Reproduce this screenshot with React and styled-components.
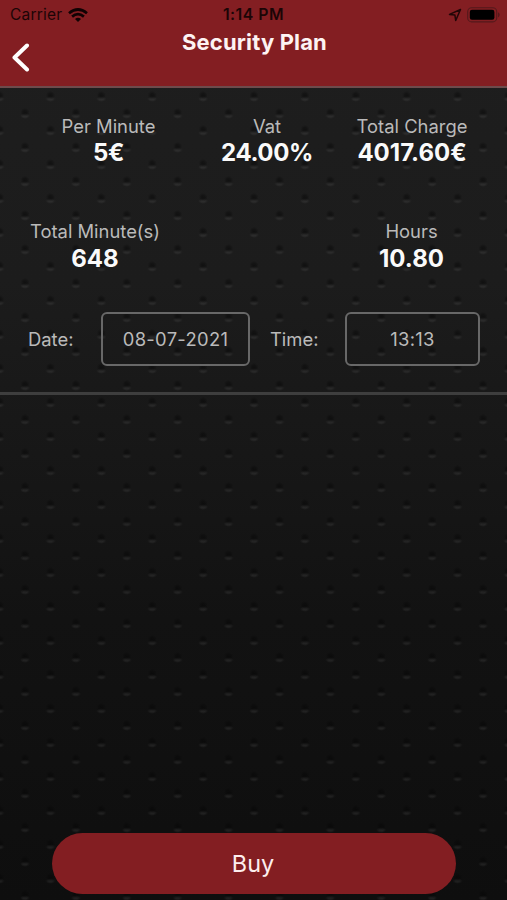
import React from "react";
import styled, { createGlobalStyle } from "styled-components";

const GlobalStyle = createGlobalStyle`
  *, *::before, *::after { box-sizing: border-box; }
  body { margin: 0; background: #0f0f0f; }
`;

const Screen = styled.main`
  height: 900px;
  display: flex;
  flex-direction: column;
  color: #bababa;
  font-family: Inter, "Liberation Sans", sans-serif;
  background-color: #161616;
  background-image:
    radial-gradient(circle at 25px 15.5px, rgba(5, 5, 5, 0.48) 0, rgba(5, 5, 5, 0.38) 2px, transparent 4.5px),
    radial-gradient(circle at 25px 15.5px, rgba(5, 5, 5, 0.48) 0, rgba(5, 5, 5, 0.38) 2px, transparent 4.5px),
    radial-gradient(4.8px 2.8px at 25px 19px, rgba(255, 255, 255, 0.08) 30%, transparent),
    radial-gradient(4.8px 2.8px at 25px 19px, rgba(255, 255, 255, 0.08) 30%, transparent),
    linear-gradient(#1e1e1e 0, #1c1c1c 280px, #181818 420px, #121212 620px, #101010 760px, #0e0e0e 900px);
  background-size: 50.9px 34px, 50.9px 34px, 50.9px 34px, 50.9px 34px, 100% 100%;
  background-position: 0 -5px, 25.45px -22px, 0 -5px, 25.45px -22px, 0 0;
`;

const Header = styled.header`
  height: 88px;
  flex: none;
  background: #831e22;
  border-bottom: 2px solid #6d4b4c;
`;

const StatusBar = styled.div`
  height: 30px;
  display: grid;
  grid-template-columns: 1fr auto 1fr;
  align-items: center;
  padding: 0 7px 0 10px;
  color: #1b0506;
  font-size: 15.5px;
  line-height: 30px;
`;

const Carrier = styled.div`
  display: flex;
  align-items: center;
  gap: 6px;
  letter-spacing: 0.2px;
`;

const Clock = styled.div`
  margin-right: 3px;
  font-size: 15.8px;
  font-weight: 600;
  letter-spacing: 0.5px;
`;

const Indicators = styled.div`
  display: flex;
  justify-content: flex-end;
  align-items: center;
  gap: 5px;
`;

const NavBar = styled.div`
  height: 56px;
  display: grid;
  grid-template-columns: 48px 1fr 46px;
`;

const BackButton = styled.button`
  display: flex;
  align-items: center;
  padding: 0 0 2px 12px;
  border: 0;
  background: none;
`;

const Title = styled.h1`
  margin: 0;
  color: #fdf3f3;
  font-size: 22px;
  font-weight: 700;
  line-height: 25px;
  text-align: center;
  letter-spacing: 0.15px;
`;

const Details = styled.section`
  height: 307px;
  flex: none;
  border-bottom: 3px solid #3e3e3e;
`;

const StatRow = styled.div`
  height: 106px;
  padding-top: ${(p) => p.$top}px;
  display: grid;
  grid-template-columns: ${(p) => p.$columns};
  align-items: start;
`;

const Stat = styled.div`
  text-align: center;
  white-space: nowrap;
`;

const StatLabel = styled.div`
  font-size: 18.4px;
  line-height: 24px;
`;

const StatValue = styled.div`
  color: #fafafa;
  font-size: 24px;
  font-weight: 700;
  line-height: ${(p) => p.$line || 30}px;
  letter-spacing: ${(p) => p.$tracking || 0}px;
`;

const ScheduleRow = styled.div`
  height: 54px;
  margin-top: 12px;
  padding: 0 27px 0 28px;
  display: grid;
  grid-template-columns: 73px 149px 20px 75px 135px;
  align-items: center;
  font-size: 18.4px;
`;

const FieldLabel = styled.label`
  grid-column: ${(p) => p.$column};
`;

const Field = styled.div`
  height: 54px;
  grid-column: ${(p) => p.$column};
  border: 2px solid #686868;
  border-radius: 6px;
  line-height: 50px;
  text-align: center;
  letter-spacing: 0.3px;
`;

const Footer = styled.footer`
  margin-top: auto;
  padding: 0 51px 6px 52px;
`;

const BuyButton = styled.button`
  width: 100%;
  height: 61px;
  display: block;
  padding: 0 2px 0 0;
  border: 0;
  border-radius: 31px;
  background: #831e22;
  color: #fdeeee;
  font-family: inherit;
  font-size: 23.4px;
  line-height: 61px;
`;

const WifiIcon = () => (
  <svg width="20" height="15" viewBox="0 0 20 15" fill="none" stroke="#100203" strokeWidth="2.7">
    <path d="M1 5.2Q10-2.2 19 5.2" />
    <path d="M4.1 8.6Q10 3.7 15.9 8.6" />
    <path d="M7 11Q10 8.5 13 11L10 14Z" fill="#100203" stroke="none" />
  </svg>
);

const LocationIcon = () => (
  <svg width="14" height="14" viewBox="0 0 14 14" fill="none" stroke="#220607" strokeWidth="1.5" strokeLinejoin="round">
    <path d="M12.5 1.5L1.5 6.4L6.9 7.1L7.7 12.5Z" />
  </svg>
);

const BatteryIcon = () => (
  <svg width="33" height="16" viewBox="0 0 33 16">
    <rect x="0.7" y="0.7" width="29" height="14.2" rx="4" fill="none" stroke="#54191b" strokeWidth="1.1" />
    <rect x="2.8" y="2.8" width="24.6" height="10" rx="2.2" fill="#000" />
    <path d="M31 5.2Q32.7 6 32.7 7.8T31 10.4Z" fill="#54191b" />
  </svg>
);

const BackIcon = () => (
  <svg width="18" height="29" viewBox="0 0 18 29" fill="none" stroke="#fff" strokeWidth="4" strokeLinecap="round" strokeLinejoin="round">
    <path d="M15 2.5L2.5 14.5L15 26.5" />
  </svg>
);

export default function App() {
  return (
    <>
      <GlobalStyle />
      <Screen>
        <Header>
          <StatusBar>
            <Carrier>Carrier <WifiIcon /></Carrier>
            <Clock>1:14 PM</Clock>
            <Indicators><LocationIcon /><BatteryIcon /></Indicators>
          </StatusBar>
          <NavBar>
            <BackButton aria-label="Back"><BackIcon /></BackButton>
            <Title>Security Plan</Title>
          </NavBar>
        </Header>
        <Details>
          <StatRow $top={26} $columns="217px 100px 190px">
            <Stat><StatLabel>Per Minute</StatLabel><StatValue $tracking={-0.5}>5€</StatValue></Stat>
            <Stat><StatLabel>Vat</StatLabel><StatValue $tracking={-0.4}>24.00%</StatValue></Stat>
            <Stat><StatLabel>Total Charge</StatLabel><StatValue>4017.60€</StatValue></Stat>
          </StatRow>
          <StatRow $top={25} $columns="190px 125px 193px">
            <Stat><StatLabel>Total Minute(s)</StatLabel><StatValue $line={32}>648</StatValue></Stat>
            <span />
            <Stat><StatLabel>Hours</StatLabel><StatValue $line={32}>10.80</StatValue></Stat>
          </StatRow>
          <ScheduleRow>
            <FieldLabel $column={1}>Date:</FieldLabel>
            <Field $column={2}>08-07-2021</Field>
            <FieldLabel $column={4}>Time:</FieldLabel>
            <Field $column={5}>13:13</Field>
          </ScheduleRow>
        </Details>
        <Footer><BuyButton>Buy</BuyButton></Footer>
      </Screen>
    </>
  );
}
